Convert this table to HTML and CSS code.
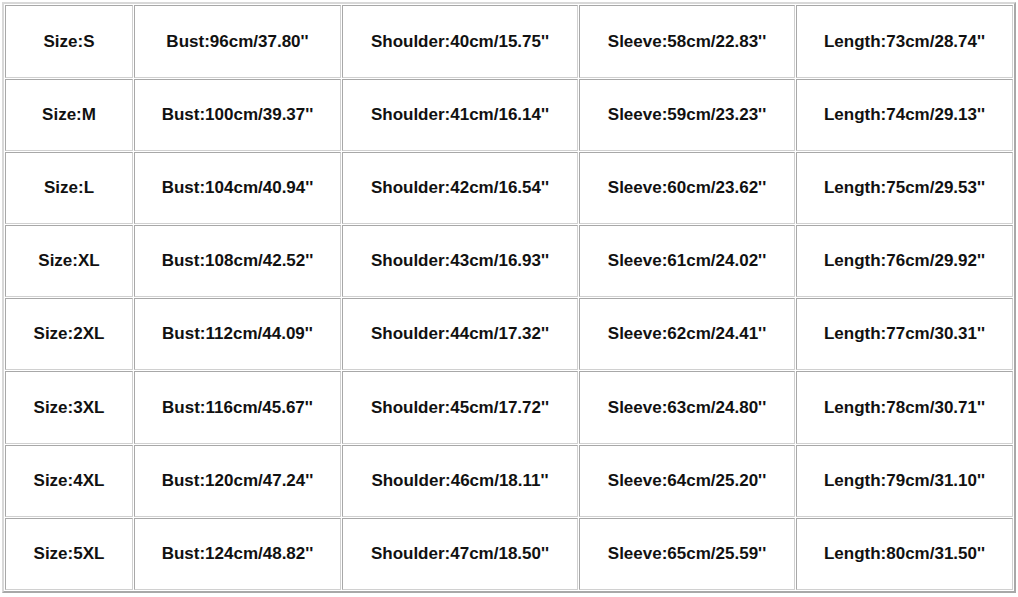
FILE: index.html
```html
<!DOCTYPE html>
<html>
<head>
<meta charset="utf-8">
<link rel="stylesheet" href="styles.css">
</head>
<body>
<table class="size-table">
<colgroup>
<col class="c1"><col class="c2"><col class="c3"><col class="c4"><col class="c5">
</colgroup>
<tr class="r-tall"><td>Size:S</td><td>Bust:96cm/37.80''</td><td>Shoulder:40cm/15.75''</td><td>Sleeve:58cm/22.83''</td><td>Length:73cm/28.74''</td></tr>
<tr class="r"><td>Size:M</td><td>Bust:100cm/39.37''</td><td>Shoulder:41cm/16.14''</td><td>Sleeve:59cm/23.23''</td><td>Length:74cm/29.13''</td></tr>
<tr class="r"><td>Size:L</td><td>Bust:104cm/40.94''</td><td>Shoulder:42cm/16.54''</td><td>Sleeve:60cm/23.62''</td><td>Length:75cm/29.53''</td></tr>
<tr class="r"><td>Size:XL</td><td>Bust:108cm/42.52''</td><td>Shoulder:43cm/16.93''</td><td>Sleeve:61cm/24.02''</td><td>Length:76cm/29.92''</td></tr>
<tr class="r"><td>Size:2XL</td><td>Bust:112cm/44.09''</td><td>Shoulder:44cm/17.32''</td><td>Sleeve:62cm/24.41''</td><td>Length:77cm/30.31''</td></tr>
<tr class="r-tall"><td>Size:3XL</td><td>Bust:116cm/45.67''</td><td>Shoulder:45cm/17.72''</td><td>Sleeve:63cm/24.80''</td><td>Length:78cm/30.71''</td></tr>
<tr class="r"><td>Size:4XL</td><td>Bust:120cm/47.24''</td><td>Shoulder:46cm/18.11''</td><td>Sleeve:64cm/25.20''</td><td>Length:79cm/31.10''</td></tr>
<tr class="r"><td>Size:5XL</td><td>Bust:124cm/48.82''</td><td>Shoulder:47cm/18.50''</td><td>Sleeve:65cm/25.59''</td><td>Length:80cm/31.50''</td></tr>
</table>
</body>
</html>
```
FILE: styles.css
```css
html, body {
  margin: 0;
  padding: 0;
  background: #ffffff;
}
.size-table {
  margin: 2px 0 0 2px;
  width: 1014px;
  table-layout: fixed;
  border-collapse: separate;
  border-spacing: 1px;
  border: 2px solid;
  border-color: #d8d8d8 #a8a8a8 #a8a8a8 #d8d8d8;
  font-family: "Liberation Sans", Arial, sans-serif;
  font-weight: bold;
  font-size: 17px;
  color: #111111;
}
.c1 { width: 128px; }
.c2 { width: 207px; }
.c3 { width: 236px; }
.c4 { width: 216px; }
.c5 { width: 217px; }
.size-table td {
  border: 1px solid;
  border-color: #a8a8a8 #d0d0d0 #d0d0d0 #a8a8a8;
  text-align: center;
  vertical-align: middle;
  padding: 0;
  white-space: nowrap;
}
.r td { height: 70px; }
.r-tall td { height: 71px; }
```
